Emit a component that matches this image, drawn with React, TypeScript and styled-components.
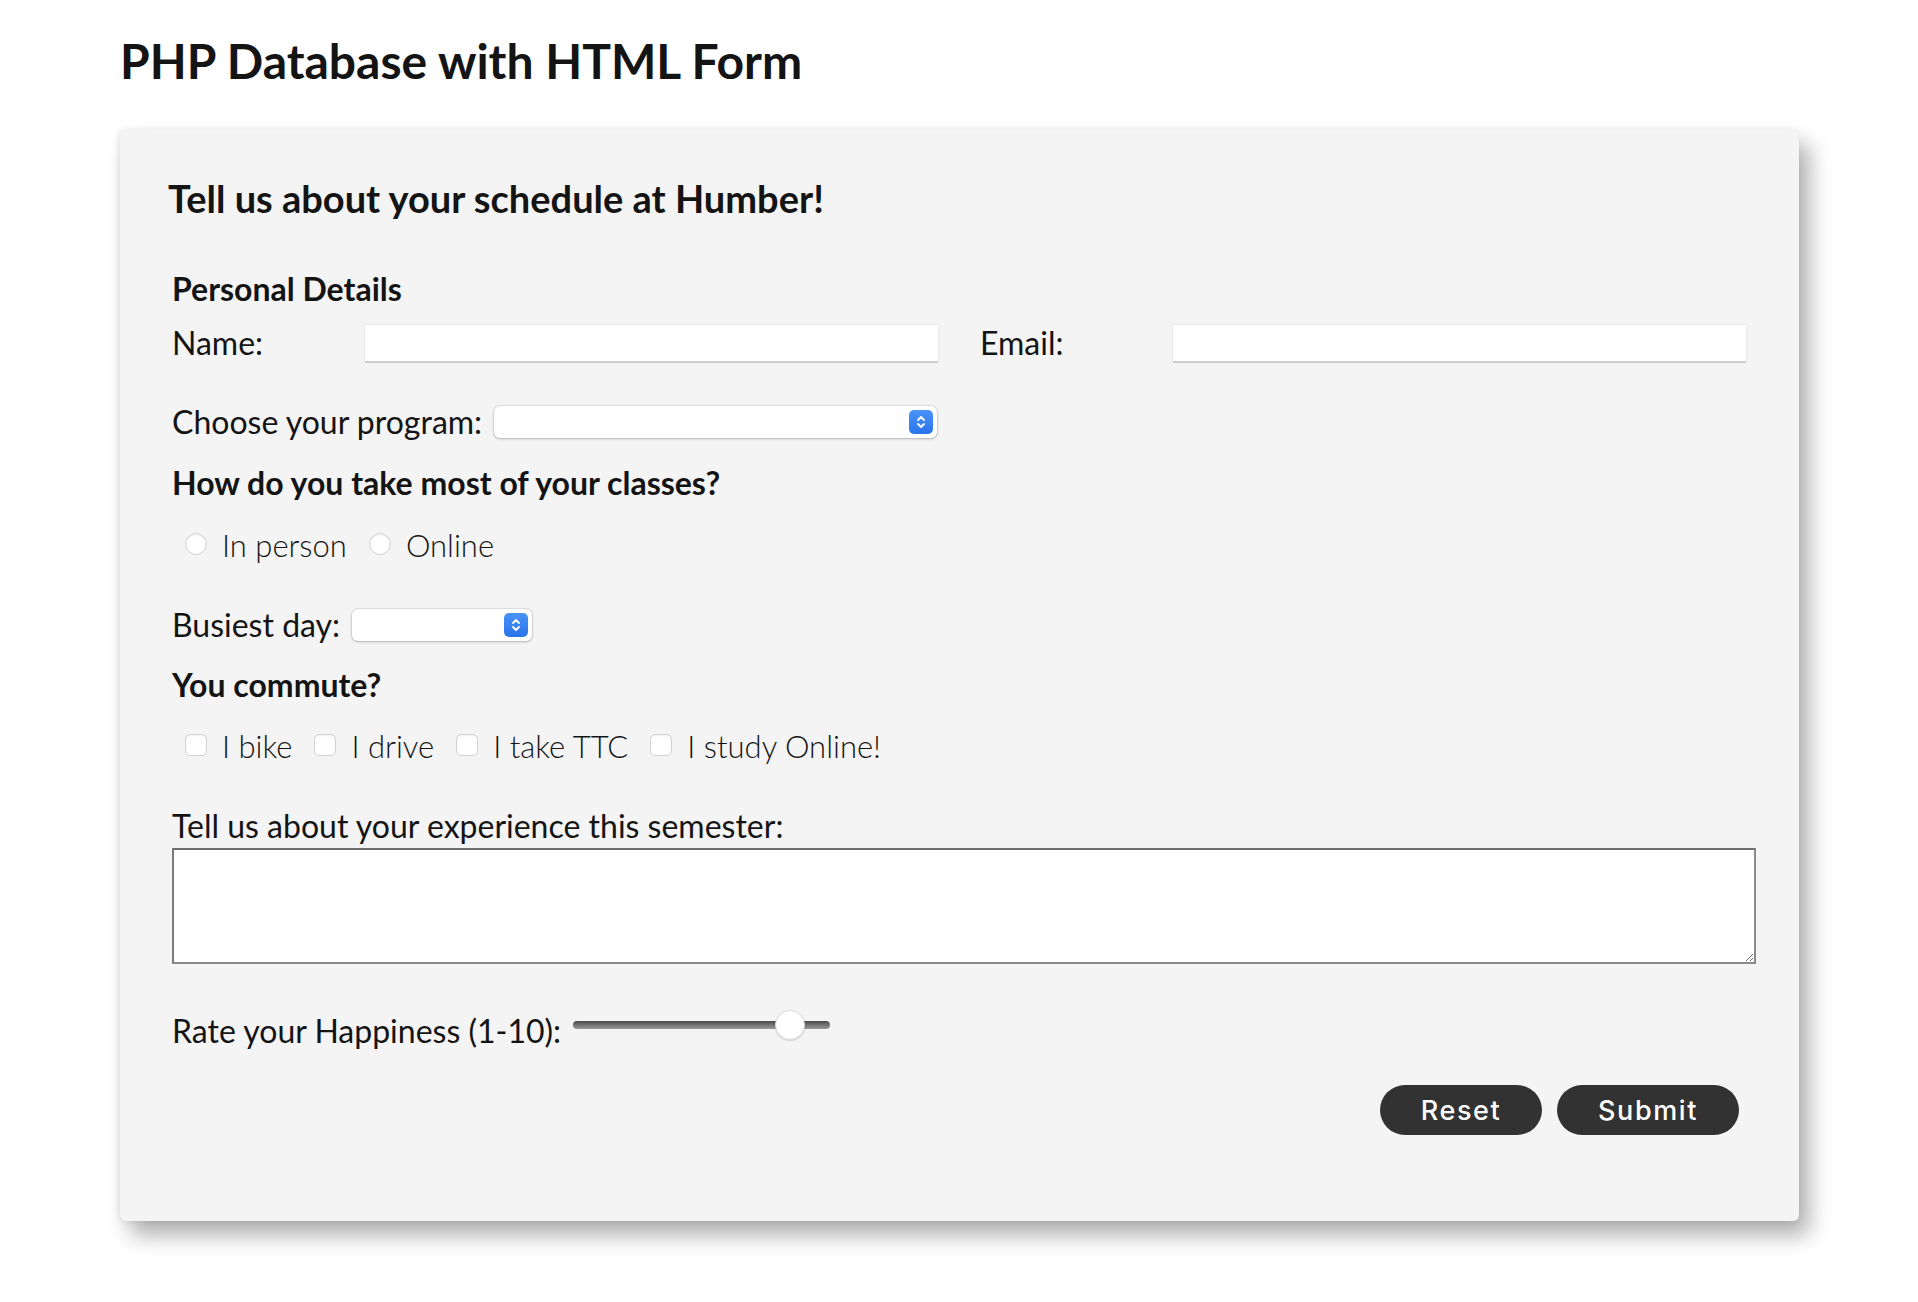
import React from "react";
import styled, { createGlobalStyle } from "styled-components";

const GlobalStyle = createGlobalStyle`
  html, body {
    margin: 0;
    padding: 0;
    background: #ffffff;
  }
  body {
    font-family: Lato, "Liberation Sans", sans-serif;
    color: #141414;
  }
  * {
    box-sizing: border-box;
  }
`;

const Page = styled.main`
  padding: 22px 119px 80px 120px;
`;

const Title = styled.h1`
  margin: 0 0 30px;
  font-size: 48px;
  line-height: 78px;
  font-weight: 700;
`;

const Card = styled.form`
  background: #f4f4f5;
  border-radius: 6px;
  padding: 45px 44px 86px 48px;
  box-shadow: 10px 14px 22px rgba(0, 0, 0, 0.32), -2px 0 6px rgba(0, 0, 0, 0.08);
`;

const CardTitle = styled.h2`
  margin: 0;
  font-size: 38px;
  line-height: 46px;
  font-weight: 700;
`;

const Body = styled.div`
  padding-left: 4px;
`;

const Heading = styled.h3<{ $top: number }>`
  margin: ${({ $top }) => $top}px 0 0;
  font-size: 32px;
  line-height: 37px;
  font-weight: 700;
`;

const Label = styled.label`
  font-size: 32px;
  line-height: 37px;
  font-weight: 400;
  white-space: nowrap;
`;

const PairGrid = styled.div`
  margin-top: 17px;
  display: grid;
  grid-template-columns: 1fr 1fr;
  column-gap: 42px;
  padding-right: 9px;
`;

const Pair = styled.div`
  display: grid;
  grid-template-columns: 193px 1fr;
  align-items: center;
`;

const TextInput = styled.input`
  height: 36px;
  border: none;
  outline: none;
  background: #ffffff;
  box-shadow: 0 2px 0 #cdcdcd, 0 0 3px rgba(0, 0, 0, 0.1);
  font-family: inherit;
  font-size: 20px;
`;

const Row = styled.div<{ $top: number }>`
  margin-top: ${({ $top }) => $top}px;
  display: flex;
  align-items: center;
`;

const SelectWrap = styled.div<{ $width: number }>`
  position: relative;
  margin-left: 12px;
  width: ${({ $width }) => $width}px;
  height: 32px;
`;

const Select = styled.select`
  appearance: none;
  width: 100%;
  height: 100%;
  border: none;
  border-radius: 6px;
  background: #ffffff;
  box-shadow: 0 0 0 1px rgba(0, 0, 0, 0.07), 0 1px 3px rgba(0, 0, 0, 0.22);
  font-family: inherit;
  font-size: 18px;
  outline: none;
`;

const Stepper = styled.span`
  position: absolute;
  right: 4px;
  top: 4px;
  width: 24px;
  height: 24px;
  border-radius: 5px;
  background: linear-gradient(#4a93f8, #2a74ec);
  display: flex;
  align-items: center;
  justify-content: center;
  pointer-events: none;
`;

const ChoiceRow = styled.div<{ $top: number }>`
  margin-top: ${({ $top }) => $top}px;
  display: flex;
  align-items: center;
  gap: 22px;
  padding-left: 13px;
`;

const Choice = styled.label`
  display: flex;
  align-items: center;
  gap: 15px;
  font-size: 31px;
  line-height: 37px;
  font-weight: 300;
`;

const Radio = styled.input`
  appearance: none;
  margin: 0;
  width: 22px;
  height: 22px;
  border-radius: 50%;
  background: #ffffff;
  border: 1px solid #d2d2d4;
  box-shadow: inset 0 1px 2px rgba(0, 0, 0, 0.08);
  position: relative;
  top: -2px;
`;

const Check = styled.input`
  appearance: none;
  margin: 0;
  width: 22px;
  height: 22px;
  border-radius: 5px;
  background: #ffffff;
  border: 1px solid #d2d2d4;
  box-shadow: inset 0 1px 2px rgba(0, 0, 0, 0.06);
  position: relative;
  top: -2px;
`;

const FieldLabel = styled(Label)`
  display: block;
  margin-top: 42px;
`;

const TextArea = styled.textarea`
  display: block;
  margin-top: 4px;
  width: calc(100% + 1px);
  height: 116px;
  border: 2px solid #8a8a8a;
  border-top-color: #6e6e6e;
  border-left-color: #7a7a7a;
  background: #ffffff;
  font-family: inherit;
  font-size: 20px;
  outline: none;
`;

const Range = styled.input`
  appearance: none;
  margin: 0 0 0 12px;
  width: 257px;
  height: 30px;
  background: transparent;
  position: relative;
  top: -6px;

  &::-webkit-slider-runnable-track {
    height: 8px;
    border-radius: 4px;
    background: linear-gradient(#4a4a4a, #9a9a9a);
  }
  &::-webkit-slider-thumb {
    appearance: none;
    width: 30px;
    height: 30px;
    margin-top: -11px;
    border-radius: 50%;
    background: #ffffff;
    border: 1px solid #dddddd;
    box-shadow: 0 1px 2px rgba(0, 0, 0, 0.15);
  }
`;

const Actions = styled.div`
  margin-top: 36px;
  padding-right: 16px;
  display: flex;
  justify-content: flex-end;
  gap: 15px;
`;

const PillButton = styled.button<{ $width: number }>`
  width: ${({ $width }) => $width}px;
  height: 50px;
  border: none;
  border-radius: 25px;
  background: #323232;
  color: #ffffff;
  font-family: Inter, "Liberation Sans", sans-serif;
  font-size: 27px;
  font-weight: 500;
  letter-spacing: 1.6px;
  cursor: pointer;
`;

function StepIcon() {
  return (
    <svg width="10" height="16" viewBox="0 0 10 16" fill="none">
      <path d="M2 6 L5 3 L8 6" stroke="#fff" strokeWidth="1.8" strokeLinecap="round" strokeLinejoin="round" />
      <path d="M2 10 L5 13 L8 10" stroke="#fff" strokeWidth="1.8" strokeLinecap="round" strokeLinejoin="round" />
    </svg>
  );
}

function Dropdown({ width, name }: { width: number; name: string }) {
  return (
    <SelectWrap $width={width}>
      <Select name={name} defaultValue="">
        <option value=""></option>
      </Select>
      <Stepper>
        <StepIcon />
      </Stepper>
    </SelectWrap>
  );
}

const commute = ["I bike", "I drive", "I take TTC", "I study Online!"];

export default function App() {
  return (
    <>
      <GlobalStyle />
      <Page>
        <Title>PHP Database with HTML Form</Title>
        <Card onSubmit={(e) => e.preventDefault()}>
          <CardTitle>Tell us about your schedule at Humber!</CardTitle>
          <Body>
            <Heading $top={49}>Personal Details</Heading>
            <PairGrid>
              <Pair>
                <Label htmlFor="name">Name:</Label>
                <TextInput id="name" type="text" />
              </Pair>
              <Pair>
                <Label htmlFor="email">Email:</Label>
                <TextInput id="email" type="email" />
              </Pair>
            </PairGrid>

            <Row $top={42}>
              <Label>Choose your program:</Label>
              <Dropdown width={443} name="program" />
            </Row>

            <Heading $top={24}>How do you take most of your classes?</Heading>
            <ChoiceRow $top={26}>
              <Choice>
                <Radio type="radio" name="mode" />
                In person
              </Choice>
              <Choice>
                <Radio type="radio" name="mode" />
                Online
              </Choice>
            </ChoiceRow>

            <Row $top={42}>
              <Label>Busiest day:</Label>
              <Dropdown width={180} name="day" />
            </Row>

            <Heading $top={23}>You commute?</Heading>
            <ChoiceRow $top={25}>
              {commute.map((c) => (
                <Choice key={c}>
                  <Check type="checkbox" />
                  {c}
                </Choice>
              ))}
            </ChoiceRow>

            <FieldLabel htmlFor="exp">Tell us about your experience this semester:</FieldLabel>
            <TextArea id="exp" />

            <Row $top={48}>
              <Label htmlFor="happy">Rate your Happiness (1-10):</Label>
              <Range id="happy" type="range" min={1} max={10} defaultValue={9} />
            </Row>

            <Actions>
              <PillButton type="reset" $width={162}>Reset</PillButton>
              <PillButton type="submit" $width={182}>Submit</PillButton>
            </Actions>
          </Body>
        </Card>
      </Page>
    </>
  );
}
